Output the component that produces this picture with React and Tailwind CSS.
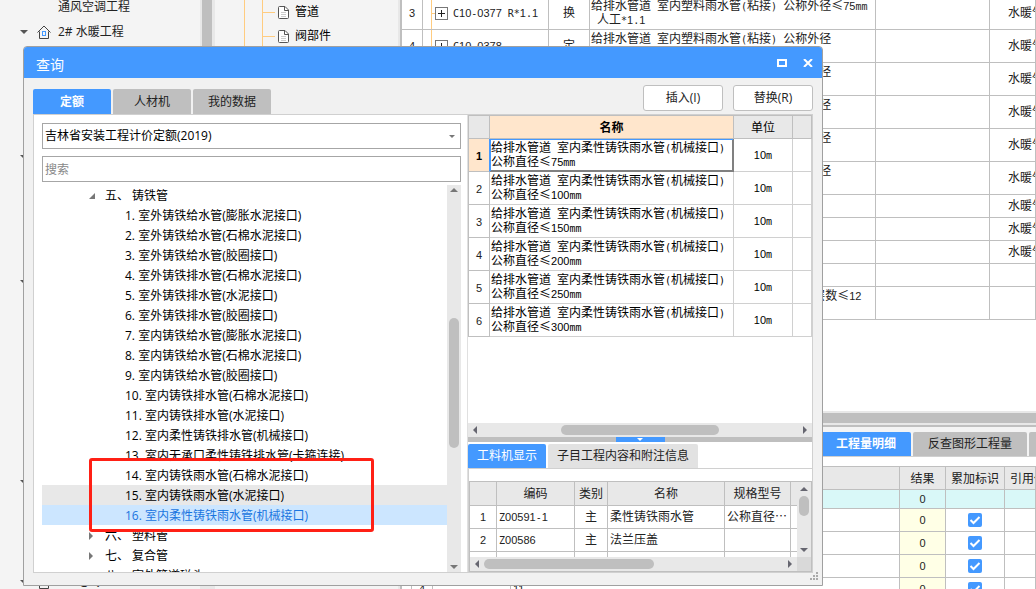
import React from "react";

const UI = "font-['Open_Sans','Noto_Sans_CJK_SC',sans-serif]";
const GRID = "font-['Noto_Sans_CJK_SC',sans-serif] text-[12px] leading-[14px]";

/* Digits and Latin runs are set in small faces of half an em, everything else in the CJK face. */
function Mixed({ children, bold }) {
  const parts = String(children).split(/([0-9]+|[\x20-\x2f\x3a-\x7e]+)/);
  const weight = bold ? " font-bold" : "";
  return parts.map((p, i) => {
    if (i % 2 === 0) return p;
    return /[0-9]/.test(p) ? (
      <span key={i} className={"font-['Liberation_Sans',sans-serif] text-[11px] leading-none" + weight}>
        {p}
      </span>
    ) : (
      <span
        key={i}
        className={"font-['DejaVu_Sans_Mono',monospace] text-[10px] leading-none whitespace-pre-wrap" + weight}
      >
        {p}
      </span>
    );
  });
}

function Triangle({ dir, className = "" }) {
  const shapes = {
    up: "M0 5 L5 0 L10 5 Z",
    down: "M0 0 L10 0 L5 5 Z",
    left: "M5 0 L5 10 L0 5 Z",
    right: "M0 0 L5 5 L0 10 Z",
    open: "M6 0 L6 6 L0 6 Z",
  };
  const boxes = { up: "0 0 10 5", down: "0 0 10 5", left: "0 0 5 10", right: "0 0 5 10", open: "0 0 6 6" };
  return (
    <svg viewBox={boxes[dir]} className={"shrink-0 fill-current " + className} aria-hidden="true">
      <path d={shapes[dir]} />
    </svg>
  );
}

function HouseIcon() {
  return (
    <svg viewBox="0 0 14 14" className="size-[14px] shrink-0" fill="none" aria-hidden="true">
      <path d="M0.5 7.5 L7 1 L13.5 7.5 M2.5 6.5 V13.5 H11.5 V6.5" stroke="#444" />
      <rect x="5.5" y="6.5" width="3" height="4" stroke="#4499ff" />
    </svg>
  );
}

function FileIcon() {
  return (
    <svg viewBox="0 0 11 13" className="h-[13px] w-[11px] shrink-0" fill="#fff" aria-hidden="true">
      <path d="M1.5 0.5 H7 L10.5 4 V11.5 Q10.5 12.5 9.5 12.5 H1.5 Q0.5 12.5 0.5 11.5 V1.5 Q0.5 0.5 1.5 0.5 Z" stroke="#555" />
      <path d="M6.5 0.5 V4.5 H10.5" stroke="#555" fill="none" />
      <path d="M3 6.5 H8 M3 8.5 H8 M3 10.5 H8" stroke="#ccc" />
    </svg>
  );
}

const projectRows = Array.from({ length: 24 }, (_, i) => {
  if (i === 0) return { text: "通风空调工程" };
  if (i === 1) return { text: "2# 水暖工程", caret: true, house: true };
  if (i === 23) return { text: "3# 电气", caret: true, house: true };
  return { text: "", caret: i === 6 || i === 11 || i === 19 };
});

function ProjectTree() {
  return (
    <aside className="h-full w-[200px] shrink-0 overflow-hidden bg-[#f4f4f4] text-[#222]">
      <ul className="-mt-[6px]">
        {projectRows.map((r, i) => (
          <li key={i} className="flex h-[25px] items-center pl-[20px] text-[12px]">
            <span className="flex w-[17px] text-[#555]">
              {r.caret && <Triangle dir="down" className="h-[4px] w-[8px]" />}
            </span>
            <span className="flex w-[21px]">{r.house && <HouseIcon />}</span>
            <span>{r.text}</span>
          </li>
        ))}
      </ul>
    </aside>
  );
}

function CategoryTree() {
  return (
    <aside className="flex h-full w-[185px] shrink-0 border-r-2 border-[#e8e8e8] bg-[#f4f4f4] pl-[29px]">
      <span className="h-4/5 w-[18px] border-l border-[#ffcc80]" />
      <ul className="h-4/5 border-l border-[#ffcc80] text-[12px] text-black">
        {["管道", "阀部件"].map((t) => (
          <li key={t} className="flex h-[24px] items-center">
            <span className="mr-[3px] h-px w-[12px] bg-[#ffcc80]" />
            <FileIcon />
            <span className="ml-[6px]">{t}</span>
          </li>
        ))}
      </ul>
    </aside>
  );
}

const pipe = "给排水管道 室内塑料雨水管(粘接) 公称外径";
const items = [
  { n: "3", code: "C10-0377 R*1.1", kind: "换", name: pipe + "≤75mm\n 人工*1.1", major: true },
  { n: "4", code: "C10-0378", kind: "定", name: pipe, major: true },
  { n: "5", name: pipe, major: true },
  { n: "6", name: pipe, major: true },
  { n: "7", name: pipe, major: true },
  { n: "8", name: pipe, major: true },
  { n: "9", short: true, major: true },
  { n: "10", short: true, major: true },
  { n: "11", short: true, major: true },
  { n: "12", short: true },
  { n: "13", name: "高层建筑增加费(给排水 采暖 燃气工程) 层数≤12" },
];

function ItemGrid() {
  const cell = "border-r border-b border-[#bfbfbf] p-0";
  return (
    <div className={"min-h-0 flex-1 overflow-hidden border-l-2 border-[#bfbfbf] bg-white text-[#222] " + GRID}>
      <table className="-mt-[3px] w-full table-fixed border-separate border-spacing-0">
        <colgroup>
          <col className="w-[21px]" />
          <col className="w-[126px]" />
          <col className="w-[41px]" />
          <col className="w-[286px]" />
          <col className="w-[114px]" />
          <col />
        </colgroup>
        <tbody>
          {items.map((r) => (
            <tr key={r.n} className={r.short ? "h-[23px]" : "h-[33px]"}>
              <td className={cell + " pb-[2px] text-center"}>
                <Mixed>{r.n}</Mixed>
              </td>
              <td className={cell}>
                {r.code && (
                  <div className="flex h-[32px] items-center pl-[8px]">
                    <span className="h-full w-px bg-[#ffcc80]" />
                    <span className="h-px w-[3px] bg-[#ffcc80]" />
                    <svg viewBox="0 0 13 13" className="mr-[5px] size-[13px]" fill="none" aria-hidden="true">
                      <rect x="0.5" y="0.5" width="12" height="12" stroke="#777" />
                      <path d="M3 6.5 H10 M6.5 3 V10" stroke="#222" />
                    </svg>
                    <span className="pb-[2px] whitespace-nowrap">
                      <Mixed>{r.code}</Mixed>
                    </span>
                  </div>
                )}
              </td>
              <td className={cell + " pb-[2px] text-center"}>{r.kind}</td>
              <td className={cell + " overflow-hidden pt-px pl-px align-top whitespace-pre"}>
                {r.name && <Mixed>{r.name}</Mixed>}
              </td>
              <td className={cell} />
              <td className={cell + " overflow-hidden pb-[2px] pl-[18px] whitespace-nowrap"}>{r.major && "水暖气"}</td>
            </tr>
          ))}
        </tbody>
      </table>
    </div>
  );
}

function Tick({ label }) {
  return (
    <label className="inline-grid size-[14px] align-middle">
      <input
        type="checkbox"
        defaultChecked
        aria-label={label}
        className="col-start-1 row-start-1 size-[14px] appearance-none rounded-[2px] bg-[#4499ff]"
      />
      <svg viewBox="0 0 14 14" className="pointer-events-none col-start-1 row-start-1 size-[14px]" fill="none" aria-hidden="true">
        <path d="M2.5 7 L5.5 10 L11.5 4" stroke="#fff" strokeWidth="2" />
      </svg>
    </label>
  );
}

function QuantityPanel() {
  const cell = "border-r border-b border-[#bfbfbf] p-0 text-center";
  const tab = "h-[24px] shrink-0 rounded-t-[2px] text-[12px] ";
  return (
    <section className="flex h-[178px] shrink-0 flex-col overflow-hidden border-l-2 border-[#bfbfbf] bg-white">
      <div className="h-[14px] shrink-0 border-y-2 border-[#e8e8e8] bg-[#bfbfbf]" />
      <div className="flex h-[32px] shrink-0 items-end gap-[2px] border-t-2 border-b border-t-[#bfbfbf] border-b-[#d0d0d0] bg-[#f4f4f4] pl-[419px]">
        <button type="button" className={tab + "w-[90px] bg-[#4499ff] font-bold text-white"}>
          工程量明细
        </button>
        <button type="button" className={tab + "w-[114px] bg-[#bfbfbf] text-[#222]"}>
          反查图形工程量
        </button>
        <button type="button" aria-label="更多" className={tab + "w-[90px] bg-[#bfbfbf]"} />
      </div>
      <div className={"overflow-hidden pt-[9px] pl-[9px] text-[#222] " + GRID}>
        <table className="w-full table-fixed border-separate border-spacing-0 border-t border-l border-[#bfbfbf]">
          <colgroup>
            <col className="w-[21px]" />
            <col className="w-[78px]" />
            <col className="w-[389px]" />
            <col className="w-[46px]" />
            <col className="w-[59px]" />
            <col />
          </colgroup>
          <thead>
            <tr className="h-[23px] bg-[#e8e8e8]">
              <th className={cell} />
              <th className={cell} />
              <th className={cell} />
              <th className={cell + " font-normal"}>结果</th>
              <th className={cell + " font-normal"}>累加标识</th>
              <th className={cell + " overflow-hidden pl-[5px] text-left font-normal whitespace-nowrap"}>引用代码</th>
            </tr>
          </thead>
          <tbody>
            <tr className="h-[19px] bg-[#d9f8f8]">
              <td className={cell} />
              <td className={cell} />
              <td className={cell} />
              <td className={cell + " pb-[2px]"}>
                <Mixed>0</Mixed>
              </td>
              <td className={cell} />
              <td className={cell} />
            </tr>
            {["1", "2", "3", "4"].map((n) => (
              <tr key={n} className="h-[23px]">
                <td className={cell + " pb-[2px]"}>
                  <Mixed>{n}</Mixed>
                </td>
                <td className={cell} />
                <td className={cell + " pb-[2px] pl-[2px] text-left"}>{n === "4" && <Mixed>11</Mixed>}</td>
                <td className={cell + " bg-[#ffffe6] pb-[2px]"}>
                  <Mixed>0</Mixed>
                </td>
                <td className={cell}>
                  <div className="flex justify-center">
                    <Tick label={"累加标识 " + n} />
                  </div>
                </td>
                <td className={cell} />
              </tr>
            ))}
          </tbody>
        </table>
      </div>
    </section>
  );
}

const quotas = [
  "1. 室外铸铁给水管(膨胀水泥接口)",
  "2. 室外铸铁给水管(石棉水泥接口)",
  "3. 室外铸铁给水管(胶圈接口)",
  "4. 室外铸铁排水管(石棉水泥接口)",
  "5. 室外铸铁排水管(水泥接口)",
  "6. 室外铸铁排水管(胶圈接口)",
  "7. 室内铸铁给水管(膨胀水泥接口)",
  "8. 室内铸铁给水管(石棉水泥接口)",
  "9. 室内铸铁给水管(胶圈接口)",
  "10. 室内铸铁排水管(石棉水泥接口)",
  "11. 室内铸铁排水管(水泥接口)",
  "12. 室内柔性铸铁排水管(机械接口)",
  "13. 室内无承口柔性铸铁排水管(卡箍连接)",
  "14. 室内铸铁雨水管(石棉水泥接口)",
  "15. 室内铸铁雨水管(水泥接口)",
  "16. 室内柔性铸铁雨水管(机械接口)",
];

function Group({ no, name, open }) {
  return (
    <li className="flex h-[20px] items-center pt-[2px] pl-[47px]">
      <span className="flex w-[16px] text-[#777]">
        {open ? <Triangle dir="open" className="size-[6px]" /> : <Triangle dir="right" className="h-[8px] w-[4px]" />}
      </span>
      <span className="w-[27px]">{no}</span>
      <span>{name}</span>
    </li>
  );
}

function QuotaPane() {
  return (
    <div className="flex w-[434px] shrink-0 flex-col border-r border-[#e0e0e0] pt-[8px] pr-[6px] pl-[8px] text-[12px] text-black">
      <label className="grid h-[26px] shrink-0 items-center">
        <select
          aria-label="定额库"
          className="col-start-1 row-start-1 h-[26px] w-full appearance-none border border-[#a6a6a6] bg-white px-[2px] text-[12px]"
        >
          <option>吉林省安装工程计价定额(2019)</option>
        </select>
        <Triangle dir="down" className="pointer-events-none col-start-1 row-start-1 mr-[6px] h-[3px] w-[6px] justify-self-end text-[#777]" />
      </label>
      <input
        type="text"
        aria-label="搜索"
        placeholder="搜索"
        className="mt-[7px] h-[26px] w-full shrink-0 border border-[#a6a6a6] bg-white px-[2px] text-[12px] placeholder:text-[#888]"
      />
      <div className="mt-[3px] flex min-h-0 flex-1">
        <ul className="min-w-0 flex-1 overflow-hidden">
          <Group no="五、" name="铸铁管" open />
          {quotas.map((q, i) => (
            <li
              key={q}
              className={
                "h-[20px] pt-px pl-[83px] leading-[20px] " +
                (i === 14 ? "bg-[#e8e8e8]" : i === 15 ? "bg-[#cce6ff] text-[#1a75e0]" : "")
              }
            >
              {q}
            </li>
          ))}
          <Group no="六、" name="塑料管" />
          <Group no="七、" name="复合管" />
          <Group no="八、" name="室外管道碰头" />
        </ul>
        <div className="flex w-[14px] shrink-0 flex-col items-center justify-between bg-[#e8e8e8] py-[3px] text-[#777]">
          <Triangle dir="up" className="h-[4px] w-[8px]" />
          <span className="mt-[126px] mb-auto h-[130px] w-[10px] rounded-full bg-[#bfbfbf]" />
          <Triangle dir="down" className="h-[4px] w-[8px]" />
        </div>
      </div>
    </div>
  );
}

const sizes = ["75", "100", "150", "200", "250", "300"];

function ResultTable() {
  const head = "border-t border-r border-b border-[#bfbfbf] p-0 bg-[#e8e8e8] font-normal ";
  const cell = "border-r border-b border-[#d0d0d0] p-0 ";
  return (
    <div className={"min-h-0 flex-1 overflow-hidden text-black " + GRID}>
      <table className="w-full table-fixed border-separate border-spacing-0 border-l border-[#bfbfbf]">
        <colgroup>
          <col className="w-[21px]" />
          <col className="w-[244px]" />
          <col className="w-[59px]" />
          <col />
        </colgroup>
        <thead>
          <tr className="h-[24px]">
            <th className={head} />
            <th className="border-t border-r border-b border-[#bfbfbf] bg-[#ffe6cc] p-0 font-bold">名称</th>
            <th className={head}>单位</th>
            <th className={head} />
          </tr>
        </thead>
        <tbody>
          {sizes.map((s, i) => (
            <tr key={s} className="h-[33px]">
              <th
                scope="row"
                className={
                  "border-r border-b border-[#bfbfbf] p-0 font-normal " +
                  (i === 0 ? "border-r-[#4499ff] bg-[#ffe6cc]" : "text-[#222]")
                }
              >
                <Mixed bold={i === 0}>{i + 1}</Mixed>
              </th>
              <td
                className={
                  "border-r border-b p-0 pb-[2px] pl-px whitespace-nowrap " +
                  (i === 0
                    ? "border-[#808080] shadow-[inset_0_1px_0_#4499ff,inset_1px_0_0_#4499ff,inset_-1px_-1px_0_#808080]"
                    : "border-[#d0d0d0]")
                }
              >
                <Mixed>给排水管道 室内柔性铸铁雨水管(机械接口)</Mixed>
                <br />
                <Mixed>{"公称直径≤" + s + "mm"}</Mixed>
              </td>
              <td className={cell + "pb-[3px] text-center"}>
                <Mixed>10m</Mixed>
              </td>
              <td className={cell} />
            </tr>
          ))}
        </tbody>
      </table>
    </div>
  );
}

function DetailTable() {
  const cell = "border-r border-b border-[#bfbfbf] p-0 ";
  const rows = [
    ["1", "Z00591-1", "主", "柔性铸铁雨水管", "公称直径⋯"],
    ["2", "Z00586", "主", "法兰压盖", ""],
    ["", "", "", "", ""],
  ];
  return (
    <div className={"mt-[12px] flex min-h-0 flex-1 flex-col border border-[#bfbfbf] text-[#222] " + GRID}>
      <div className="flex min-h-0 flex-1">
        <div className="min-w-0 flex-1 overflow-hidden">
          <table className="w-full table-fixed border-separate border-spacing-0">
            <colgroup>
              <col className="w-[27px]" />
              <col className="w-[78px]" />
              <col className="w-[33px]" />
              <col className="w-[117px]" />
              <col className="w-[66px]" />
              <col />
            </colgroup>
            <thead>
              <tr className="h-[24px] bg-[#e8e8e8]">
                {["", "编码", "类别", "名称", "规格型号", ""].map((h, i) => (
                  <th key={i} className={(i === 5 ? "border-b border-[#bfbfbf] p-0 " : cell) + "pb-[2px] font-normal"}>
                    {h}
                  </th>
                ))}
              </tr>
            </thead>
            <tbody>
              {rows.map((r, i) => (
                <tr key={i} className="h-[23px]">
                  <td className={cell + "pb-[2px] text-center"}>
                    <Mixed>{r[0]}</Mixed>
                  </td>
                  <td className={cell + "pb-[2px] pl-[2px]"}>
                    <Mixed>{r[1]}</Mixed>
                  </td>
                  <td className={cell + "pb-[2px] text-center"}>{r[2]}</td>
                  <td className={cell + "pb-[2px] pl-[2px]"}>{r[3]}</td>
                  <td className={cell + "pb-[2px] pl-[2px] whitespace-nowrap"}>{r[4]}</td>
                  <td className="border-b border-[#bfbfbf] p-0" />
                </tr>
              ))}
            </tbody>
          </table>
        </div>
        <div className="flex w-[14px] shrink-0 flex-col items-center justify-between bg-[#e8e8e8] py-[5px] text-[#666670]">
          <Triangle dir="up" className="h-[4px] w-[8px]" />
          <span className="mt-[5px] mb-auto h-[20px] w-[10px] rounded-full bg-[#bfbfbf]" />
          <Triangle dir="down" className="h-[4px] w-[8px]" />
        </div>
      </div>
      <div className="flex h-[14px] shrink-0 bg-[#d9d9d9]">
        <div className="mr-[14px] flex flex-1 items-center bg-[#e8e8e8] px-[5px] text-[#666670]">
          <Triangle dir="left" className="h-[8px] w-[4px]" />
          <span className="mr-auto ml-[5px] h-[10px] w-[170px] rounded-full bg-[#bfbfbf]" />
          <Triangle dir="right" className="h-[8px] w-[4px]" />
        </div>
      </div>
    </div>
  );
}

function ResultPane() {
  return (
    <div className="flex min-w-0 flex-1 flex-col">
      <ResultTable />
      <div className="flex h-[14px] shrink-0 items-center bg-[#e8e8e8] px-[5px] text-[#666670]">
        <Triangle dir="left" className="h-[8px] w-[4px]" />
        <span className="mr-auto ml-[84px] h-[10px] w-[158px] rounded-full bg-[#bfbfbf]" />
        <Triangle dir="right" className="h-[8px] w-[4px]" />
      </div>
      <div className="flex h-[5px] shrink-0 justify-center bg-[#bfbfbf]">
        <button type="button" aria-label="收起" className="flex h-[5px] w-[49px] items-center justify-center bg-[#4499ff] text-white">
          <Triangle dir="down" className="h-[3px] w-[6px]" />
        </button>
      </div>
      <div className="mt-[2px] flex h-[24px] shrink-0 gap-[2px] text-[12px]">
        <button type="button" className="w-[78px] rounded-t-[2px] bg-[#4499ff] text-white">
          工料机显示
        </button>
        <button type="button" className="w-[150px] rounded-t-[2px] bg-[#e2e2e2] text-[#222]">
          子目工程内容和附注信息
        </button>
      </div>
      <div className="flex h-[104px] shrink-0 flex-col border-t border-l border-[#d0d0d0]">
        <DetailTable />
      </div>
    </div>
  );
}

function QueryDialog() {
  const tab = "h-[25px] w-[78px] rounded-t-[2px] text-[12px] ";
  const action = "h-[26px] w-[80px] rounded-[3px] border border-[#bfbfbf] bg-white text-[12px] text-[#222]";
  return (
    <div
      role="dialog"
      aria-label="查询"
      className="absolute top-[46px] left-[23px] flex h-[540px] w-[800px] flex-col overflow-hidden rounded-t-[4px] border border-[#a0a0a0] bg-[#f1f1f1]"
    >
      <header className="flex h-[31px] shrink-0 items-center bg-[#4499ff] pr-[9px] pl-[12px] text-white">
        <h1 className="mr-auto pt-[3px] text-[14px]">查询</h1>
        <button type="button" aria-label="最大化" className="mr-[16px]">
          <svg viewBox="0 0 10 8" className="h-[8px] w-[10px]" fill="none" aria-hidden="true">
            <rect x="1" y="1" width="8" height="6" stroke="#fff" strokeWidth="2" />
          </svg>
        </button>
        <button type="button" aria-label="关闭">
          <svg viewBox="0 0 10 8" className="h-[8px] w-[10px]" fill="none" aria-hidden="true">
            <path d="M1 0 L9 8 M9 0 L1 8" stroke="#fff" strokeWidth="2" />
          </svg>
        </button>
      </header>
      <div className="flex h-[36px] shrink-0 items-end gap-[2px] px-[9px]">
        <button type="button" className={tab + "bg-[#4499ff] font-bold text-white"}>
          定额
        </button>
        <button type="button" className={tab + "bg-[#bfbfbf] text-[#222]"}>
          人材机
        </button>
        <button type="button" className={tab + "bg-[#bfbfbf] text-[#222]"}>
          我的数据
        </button>
        <div className="mb-[3px] ml-auto flex gap-[10px]">
          <button type="button" className={action}>
            插入(I)
          </button>
          <button type="button" className={action}>
            替换(R)
          </button>
        </div>
      </div>
      <div className="mx-[9px] mb-[12px] flex min-h-0 flex-1 border border-[#d0d0d0] bg-white">
        <QuotaPane />
        <ResultPane />
      </div>
      <svg viewBox="0 0 9 9" className="absolute right-[3px] bottom-[4px] size-[9px] fill-[#aaa]" aria-hidden="true">
        <path d="M6 0h2v2h-2z M3 3h2v2h-2z M6 3h2v2h-2z M0 6h2v2h-2z M3 6h2v2h-2z M6 6h2v2h-2z" />
      </svg>
      <div className="pointer-events-none absolute top-[411px] left-[65px] h-[74px] w-[285px] rounded-[3px] border-[3px] border-[#ff2015]" />
    </div>
  );
}

export default function App() {
  return (
    <div className={"relative flex h-screen w-full overflow-hidden bg-[#f4f4f4] " + UI}>
      <ProjectTree />
      <div className="h-full w-[15px] shrink-0 border-r-[3px] border-l-2 border-[#e8e8e8] bg-[#e8e8e8]">
        <div className="h-4/5 bg-[#bfbfbf]" />
      </div>
      <CategoryTree />
      <main className="flex min-w-0 flex-1 flex-col">
        <ItemGrid />
        <QuantityPanel />
      </main>
      <QueryDialog />
    </div>
  );
}
